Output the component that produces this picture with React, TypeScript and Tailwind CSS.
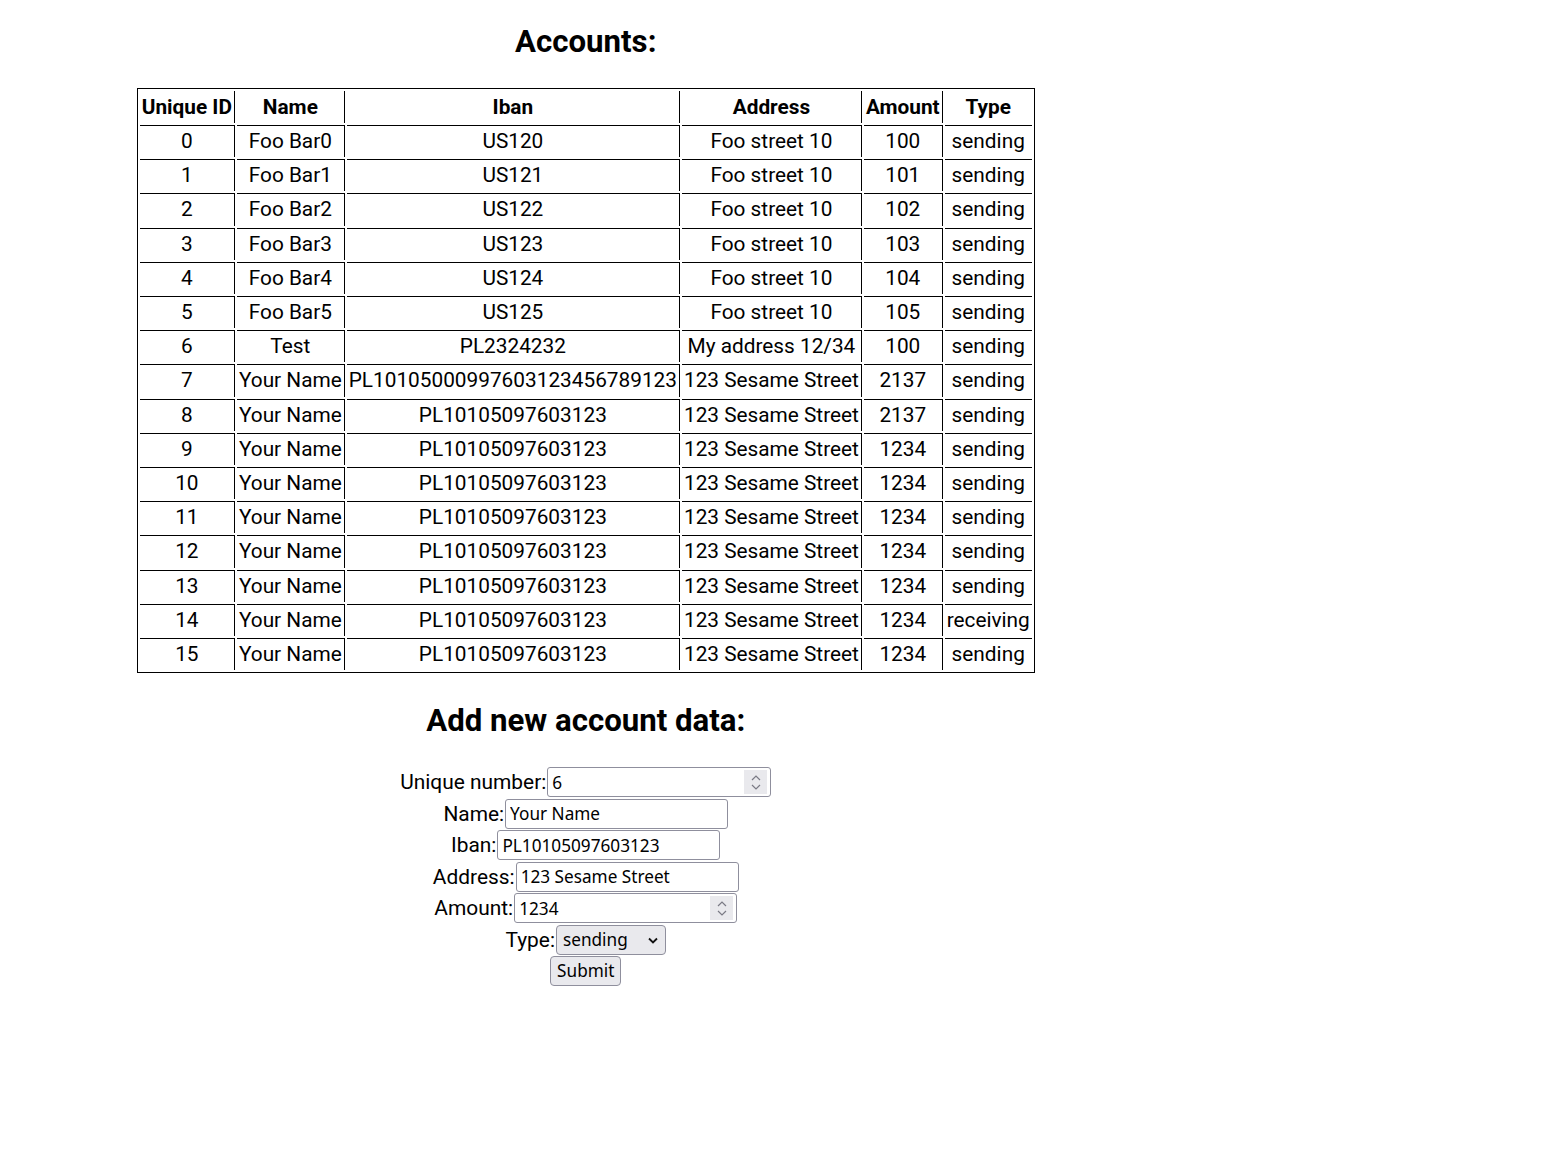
import React from "react";

type Row = { id: number; name: string; iban: string; address: string; amount: number; type: string };

const rows: Row[] = [
  ...[0, 1, 2, 3, 4, 5].map((i) => ({
    id: i,
    name: `Foo Bar${i}`,
    iban: `US12${i}`,
    address: "Foo street 10",
    amount: 100 + i,
    type: "sending",
  })),
  { id: 6, name: "Test", iban: "PL2324232", address: "My address 12/34", amount: 100, type: "sending" },
  { id: 7, name: "Your Name", iban: "PL10105000997603123456789123", address: "123 Sesame Street", amount: 2137, type: "sending" },
  { id: 8, name: "Your Name", iban: "PL10105097603123", address: "123 Sesame Street", amount: 2137, type: "sending" },
  ...[9, 10, 11, 12, 13, 14, 15].map((i) => ({
    id: i,
    name: "Your Name",
    iban: "PL10105097603123",
    address: "123 Sesame Street",
    amount: 1234,
    type: i === 14 ? "receiving" : "sending",
  })),
];

const headers = ["Unique ID", "Name", "Iban", "Address", "Amount", "Type"];

function FormRow({ label, children }: { label: string; children: React.ReactNode }) {
  return (
    <div className="flex h-[31.5px] items-center justify-center">
      <label className="text-[20.9px] leading-[24px]">{label}</label>
      <div className="ml-px flex items-center">{children}</div>
    </div>
  );
}

const inputCls =
  "h-[30px] w-[223px] rounded-[3px] border border-[#8f8f9d] bg-white px-[4px] text-[17.2px] font-['Noto_Sans',sans-serif] text-black outline-none";

function Spin() {
  return (
    <div className="pointer-events-none absolute right-[4px] top-[3px] flex h-[24px] w-[23px] flex-col items-center justify-center gap-[3px] bg-[#e9e9ed]">
      <svg width="10" height="6" viewBox="0 0 10 6" fill="none">
        <path d="M1 5L5 1L9 5" stroke="#7a7a85" strokeWidth="1.2" />
      </svg>
      <svg width="10" height="6" viewBox="0 0 10 6" fill="none">
        <path d="M1 1L5 5L9 1" stroke="#7a7a85" strokeWidth="1.2" />
      </svg>
    </div>
  );
}

const numCls =
  "[appearance:textfield] [&::-webkit-inner-spin-button]:appearance-none [&::-webkit-outer-spin-button]:appearance-none";

export default function App() {
  return (
    <div className="w-3/4 text-center text-black font-['Roboto',sans-serif]">
      <h1 className="mt-[24px] mb-[27px] text-[31.2px] font-bold leading-[36.8px]">Accounts:</h1>
      <table className="mx-auto border-separate border-spacing-[2px] border border-black text-[20.8px] leading-[27.2px]">
        <thead>
          <tr>
            {headers.map((h, ci) => (
              <th
                key={h}
                className={`px-[2px] pt-[3px] pb-[2px] font-bold whitespace-nowrap border-black ${ci < headers.length - 1 ? "border-r" : ""}`}
              >
                {h}
              </th>
            ))}
          </tr>
        </thead>
        <tbody>
          {rows.map((r) => {
            const cells = [r.id, r.name, r.iban, r.address, r.amount, r.type];
            return (
              <tr key={r.id}>
                {cells.map((c, ci) => (
                  <td
                    key={ci}
                    className={`px-[2px] py-[2px] whitespace-nowrap border-t border-black ${
                      ci < cells.length - 1 ? "border-r" : ""
                    }`}
                  >
                    {c}
                  </td>
                ))}
              </tr>
            );
          })}
        </tbody>
      </table>

      <h1 className="mt-[30px] mb-[26.5px] text-[31.2px] font-bold leading-[36.8px]">Add new account data:</h1>

      <form className="flex flex-col" onSubmit={(e) => e.preventDefault()}>
        <FormRow label="Unique number:">
          <div className="relative flex">
            <input type="number" defaultValue={6} className={`${inputCls} ${numCls} w-[224px]`} />
            <Spin />
          </div>
        </FormRow>
        <FormRow label="Name:">
          <input type="text" defaultValue="Your Name" className={inputCls} />
        </FormRow>
        <FormRow label="Iban:">
          <input type="text" defaultValue="PL10105097603123" className={inputCls} />
        </FormRow>
        <FormRow label="Address:">
          <input type="text" defaultValue="123 Sesame Street" className={inputCls} />
        </FormRow>
        <FormRow label="Amount:">
          <div className="relative flex">
            <input type="number" defaultValue={1234} className={`${inputCls} ${numCls}`} />
            <Spin />
          </div>
        </FormRow>
        <FormRow label="Type:">
          <div className="relative flex">
            <select
              defaultValue="sending"
              className="h-[30px] w-[110px] appearance-none rounded-[4px] border border-[#8f8f9d] bg-[#e9e9ed] pl-[6px] text-left text-[17.2px] font-['Noto_Sans',sans-serif] text-black outline-none"
            >
              <option value="sending">sending</option>
              <option value="receiving">receiving</option>
            </select>
            <svg
              className="pointer-events-none absolute right-[8px] top-[12px]"
              width="10"
              height="7"
              viewBox="0 0 10 7"
              fill="none"
            >
              <path d="M1 1.5L5 5.5L9 1.5" stroke="#111" strokeWidth="1.8" />
            </svg>
          </div>
        </FormRow>
        <div className="flex h-[31.5px] items-center justify-center">
          <button
            type="submit"
            className="h-[30px] w-[71px] rounded-[4px] border border-[#8f8f9d] bg-[#e9e9ed] text-[17.2px] font-['Noto_Sans',sans-serif] text-black"
          >
            Submit
          </button>
        </div>
      </form>
    </div>
  );
}
